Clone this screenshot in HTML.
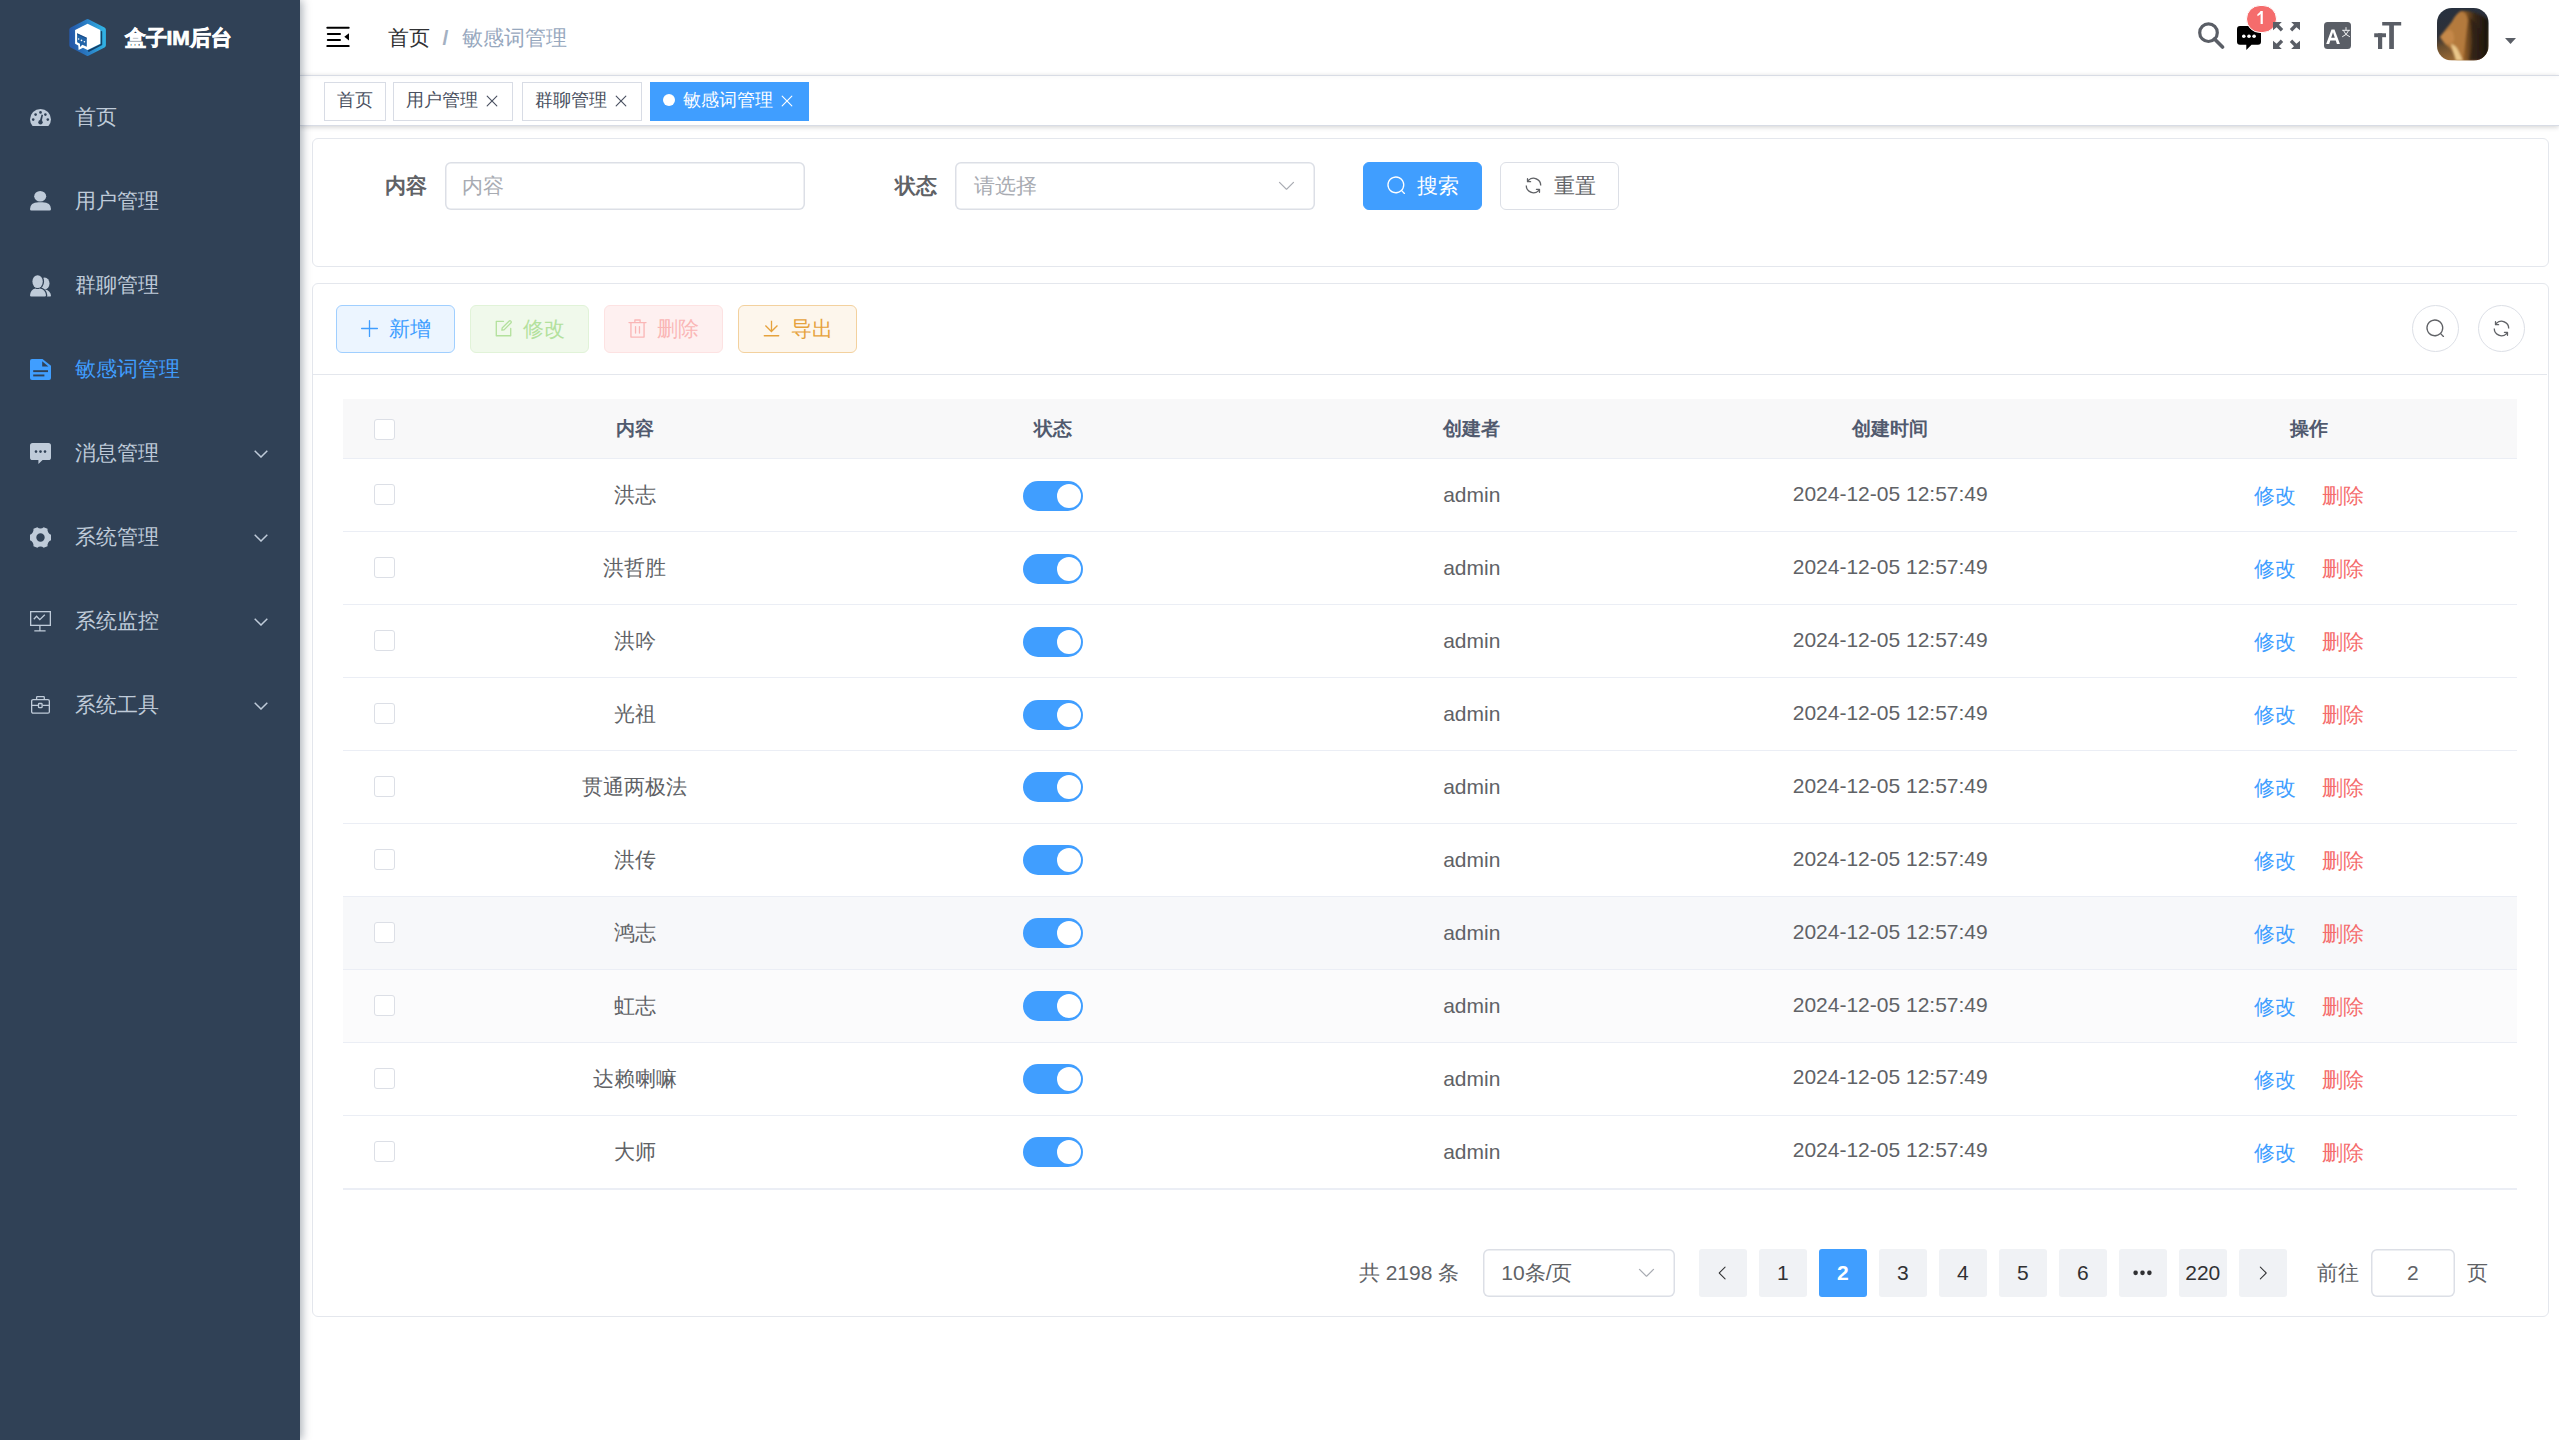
<!DOCTYPE html>
<html><head><meta charset="utf-8">
<style>
*{box-sizing:border-box;margin:0;padding:0}
html,body{width:2559px;height:1440px;overflow:hidden;background:#fff;font-family:"Liberation Sans",sans-serif;}
.abs{position:absolute}
#side{position:absolute;left:0;top:0;width:300px;height:1440px;background:#304156;z-index:3;box-shadow:2px 0 9px rgba(0,21,41,.35)}
.title{position:absolute;left:124.5px;top:0;line-height:75px;color:#fff;font-weight:bold;font-size:21px;-webkit-text-stroke:0.7px #fff}
.mi{position:absolute;left:0;width:300px;height:84px;line-height:84px;color:#bfcbd9;font-size:21px}
.mi svg{position:absolute}
.mi .tx{position:absolute;left:75px;top:0.7px}
.mi.act{color:#409eff}
#nav{position:absolute;left:300px;top:0;width:2259px;height:75px;background:#fff}
#navline{position:absolute;left:300px;top:74.8px;width:2259px;height:1.5px;background:#d8dce5;box-shadow:0 0 4px rgba(0,21,41,.10);z-index:2}
#nav svg{position:absolute}
#tags{position:absolute;left:300px;top:75px;width:2259px;height:51px;background:#fff;border-bottom:1.5px solid #d8dce5;box-shadow:0 1.5px 4.5px 0 rgba(0,0,0,.12),0 0 4.5px 0 rgba(0,0,0,.04)}
.tag{position:absolute;top:7px;height:39px;line-height:34px;border:1.5px solid #d8dce5;color:#495060;background:#fff;font-size:18px}
.tag span{position:absolute;top:0}
.tag svg{position:absolute}
.tag.act{background:#409eff;border-color:#409eff;color:#fff}
.card{position:absolute;left:312.5px;width:2236px;border:1.5px solid #e4e7ed;border-radius:6px;background:#fff}
.lbl{position:absolute;font-size:21px;font-weight:bold;color:#606266;line-height:48px}
.inp{position:absolute;height:48px;border-radius:6px;box-shadow:0 0 0 1.5px #dcdfe6 inset;font-size:21px;line-height:48px;color:#a8abb2}
.inp span{position:absolute;top:0}
.btn{position:absolute;height:48px;border-radius:6px;font-size:21px;line-height:46px;border:1.5px solid}
.btn span{position:absolute;top:0}
.btn svg{position:absolute}
.th{position:absolute;top:0;height:59px;line-height:59px;font-size:19px;font-weight:bold;color:#515a6e;text-align:center}
.row{position:absolute;left:0;width:2174px;height:72.93px;border-bottom:1.5px solid #ebeef5}
.td{position:absolute;top:0;height:72px;line-height:72px;font-size:21px;color:#606266;text-align:center}
.cb{position:absolute;left:30.8px;width:21px;height:21px;border:1.5px solid #dcdfe6;border-radius:3px;background:#fff}
.sw{position:absolute;left:679.8px;width:60px;height:30px;border-radius:15px;background:#409eff}
.sw:after{content:"";position:absolute;right:2.5px;top:3px;width:24px;height:24px;border-radius:50%;background:#fff}
.pg{position:absolute;top:0;width:48px;height:48px;line-height:48px;border-radius:3px;background:#f0f2f5;color:#303133;font-size:21px;text-align:center}
</style></head><body>

<div id="side">
<svg class="abs" style="left:64px;top:14px;width:48px;height:46px" viewBox="0 0 48 46">
<defs><linearGradient id="lg" x1="0" y1="0.5" x2="1" y2="0.4"><stop offset="0" stop-color="#2559a9"/><stop offset=".5" stop-color="#2a7fc6"/><stop offset="1" stop-color="#31b1e3"/></linearGradient>
<filter id="bl" x="-20%" y="-20%" width="140%" height="140%"><feGaussianBlur stdDeviation="0.6"/></filter></defs>
<path fill="url(#lg)" stroke="url(#lg)" stroke-width="5" stroke-linejoin="round" d="M23.8 7.6L39.4 15.7V31.3L23.8 39.4L7.8 31.3V15.7Z"/>
<path fill="#0a2240" opacity=".75" filter="url(#bl)" d="M36.6 16.5L38.2 17.5V31L24.6 38L23.6 36.4L36.6 29.9Z"/>
<path fill="#fff" d="M11.1 16L23.6 9.7L36.3 16V29.7L23.6 36.1L19 33.8L14.6 35.9L14.3 31.4L11.1 29.7Z"/>
<path fill="#2163a8" d="M13.1 19.3L22.8 23.8V32.8L18.3 30.7L16 33.1V29.7L13.1 28.3Z"/>
<path fill="#0f3b70" opacity=".6" d="M13.1 19.3L22.8 23.8V24.8L13.1 20.4Z"/>
<g fill="#fff"><circle cx="14.6" cy="25" r="0.8"/><circle cx="17.5" cy="26.4" r="0.8"/><circle cx="20.4" cy="27.8" r="0.8"/></g>
</svg>
<div class="title">盒子IM后台</div>
<div class="mi" style="top:74px">
<svg style="left:30px;top:35px;width:21px;height:17px" viewBox="0 0 21 17"><path fill="#bfcbd9" d="M2.6 17H18.4Q21 13.8 21 10.5A10.5 10.5 0 0 0 0 10.5Q0 13.8 2.6 17Z"/><g fill="#304156"><circle cx="3.2" cy="10.6" r="1.3"/><circle cx="5.6" cy="5.6" r="1.3"/><circle cx="10.5" cy="3.4" r="1.3"/><circle cx="15.4" cy="5.6" r="1.3"/><circle cx="17.8" cy="10.6" r="1.3"/><circle cx="10.5" cy="13.2" r="2.2"/><path d="M9.5 12.8L11.6 5.6L13 6L11.5 13.2Z"/></g></svg>
<span class="tx">首页</span>
</div>
<div class="mi" style="top:158px">
<svg style="left:30px;top:32px;width:21px;height:21px" viewBox="0 0 21 21"><g fill="#bfcbd9"><ellipse cx="10.2" cy="6.2" rx="6" ry="5.2"/><path d="M0 19Q0 12.5 8.5 12.2H12.5Q21 12.5 21 19Q21 20.6 19.6 20.6H1.4Q0 20.6 0 19Z"/></g></svg>
<span class="tx">用户管理</span>
</div>
<div class="mi" style="top:242px">
<svg style="left:30px;top:32.5px;width:21px;height:22px" viewBox="0 0 21 22"><g fill="#bfcbd9"><ellipse cx="14.6" cy="8.6" rx="4.9" ry="6"/><path d="M9 15.5Q12 14.6 15.2 14.6Q20.6 15.8 21 20.8Q21 21.6 20.2 21.6H12Z"/></g><g stroke="#304156" stroke-width="2.6" fill="#304156"><ellipse cx="7.6" cy="6.6" rx="5.2" ry="6.4"/><path d="M0 20.2Q0.5 14.6 5.4 13.4Q7.6 14.8 9.8 13.4Q15.6 14.6 16 20.2Q16 21.6 14.8 21.6H1.2Q0 21.6 0 20.2Z"/></g><g fill="#bfcbd9"><ellipse cx="7.6" cy="6.6" rx="5.2" ry="6.4"/><path d="M0 20.2Q0.5 14.6 5.4 13.4Q7.6 14.8 9.8 13.4Q15.6 14.6 16 20.2Q16 21.6 14.8 21.6H1.2Q0 21.6 0 20.2Z"/></g></svg>
<span class="tx">群聊管理</span>
</div>
<div class="mi act" style="top:326px">
<svg style="left:30px;top:33px;width:21px;height:21px" viewBox="0 0 21 21"><path fill="#409eff" d="M2 0H12.5L21 6.8V19Q21 21 19 21H2Q0 21 0 19V2Q0 0 2 0Z"/><g fill="#304156"><path d="M12.2 2.3V7.5H18.4Z"/><rect x="3.2" y="11.2" width="14.8" height="1.9"/><rect x="3.2" y="15.5" width="11.2" height="1.9"/></g></svg>
<span class="tx">敏感词管理</span>
</div>
<div class="mi" style="top:410px">
<svg style="left:30px;top:33px;width:21px;height:21px" viewBox="0 0 21 21"><path fill="#bfcbd9" d="M2.6 0H18.4Q21 0 21 2.6V14.4Q21 17 18.4 17H12.6L8.4 21V17H2.6Q0 17 0 14.4V2.6Q0 0 2.6 0Z"/><g fill="#304156"><circle cx="6" cy="8.6" r="1.3"/><circle cx="10.5" cy="8.6" r="1.3"/><circle cx="15" cy="8.6" r="1.3"/></g></svg>
<span class="tx">消息管理</span>
<svg style="left:254px;top:40px;width:14px;height:8px" viewBox="0 0 14 8"><path d="M0.7 0.7L7 7L13.3 0.7" fill="none" stroke="#bfcbd9" stroke-width="1.5"/></svg>
</div>
<div class="mi" style="top:494px">
<svg style="left:30px;top:33px;width:21px;height:21px" viewBox="0 0 21 21"><path fill="#bfcbd9" fill-rule="evenodd" d="M7.3 0.3Q8.7 1.6 10.5 1.6Q12.3 1.6 13.7 0.3L17.5 1.7Q17.3 3.8 18.3 5.5Q19.4 7.2 21 7.8V13.2Q19.4 13.8 18.3 15.5Q17.3 17.2 17.5 19.3L13.7 20.7Q12.3 19.4 10.5 19.4Q8.7 19.4 7.3 20.7L3.5 19.3Q3.7 17.2 2.7 15.5Q1.6 13.8 0 13.2V7.8Q1.6 7.2 2.7 5.5Q3.7 3.8 3.5 1.7Z M10.5 6.3A4.2 4.2 0 1 0 10.5 14.7A4.2 4.2 0 1 0 10.5 6.3Z"/></svg>
<span class="tx">系统管理</span>
<svg style="left:254px;top:40px;width:14px;height:8px" viewBox="0 0 14 8"><path d="M0.7 0.7L7 7L13.3 0.7" fill="none" stroke="#bfcbd9" stroke-width="1.5"/></svg>
</div>
<div class="mi" style="top:578px">
<svg style="left:30px;top:33px;width:21px;height:21px" viewBox="0 0 21 21"><g fill="none" stroke="#bfcbd9" stroke-width="1.3"><rect x="0.65" y="0.65" width="19.7" height="13.7"/><path d="M9.9 14.3V19.9M4.3 19.9H15.6"/><path d="M3.8 8.2L6.6 5.2L9.8 8.6L14.8 3.7"/></g></svg>
<span class="tx">系统监控</span>
<svg style="left:254px;top:40px;width:14px;height:8px" viewBox="0 0 14 8"><path d="M0.7 0.7L7 7L13.3 0.7" fill="none" stroke="#bfcbd9" stroke-width="1.5"/></svg>
</div>
<div class="mi" style="top:662px">
<svg style="left:31px;top:34px;width:19px;height:18px" viewBox="0 0 19 18"><g fill="none" stroke="#bfcbd9" stroke-width="1.3"><rect x="0.65" y="3.6" width="17.7" height="13.6" rx="1.5"/><path d="M5.6 3.4V1.4Q5.6 0.65 6.4 0.65H12.6Q13.3 0.65 13.3 1.4V3.6"/><path d="M0.7 9.3H7.5M11.5 9.3H18.3"/><rect x="7.5" y="7.5" width="3.6" height="4.2" rx="0.8"/></g></svg>
<span class="tx">系统工具</span>
<svg style="left:254px;top:40px;width:14px;height:8px" viewBox="0 0 14 8"><path d="M0.7 0.7L7 7L13.3 0.7" fill="none" stroke="#bfcbd9" stroke-width="1.5"/></svg>
</div>
</div>
<div id="nav">
<svg style="left:26px;top:26px;width:24px;height:21px" viewBox="0 0 24 21"><g fill="#000"><rect x="0.3" y="0.8" width="23.4" height="2" rx="1"/><rect x="0.8" y="6.9" width="14.2" height="2" rx="1"/><rect x="0.8" y="13.1" width="14.2" height="2" rx="1"/><rect x="0.3" y="19.1" width="23.4" height="2" rx="1"/><path d="M23 7.2V14.5L18.3 10.8Z"/></g></svg>
<div class="abs" style="left:88px;top:0;line-height:75px;font-size:21px;color:#303133">首页</div>
<div class="abs" style="left:142.5px;top:0;line-height:75px;font-size:21px;color:#a3b0c2;font-weight:bold">/</div>
<div class="abs" style="left:162px;top:0;line-height:75px;font-size:21px;color:#97a8be">敏感词管理</div>
<svg style="left:1897px;top:21px;width:28px;height:28px" viewBox="0 0 28 28"><circle cx="11.5" cy="11.7" r="8.8" fill="none" stroke="#5a5e66" stroke-width="3.2"/><path d="M17.5 18L25.5 26" stroke="#5a5e66" stroke-width="3.6" stroke-linecap="round"/></svg>
<svg style="left:1937px;top:26px;width:24px;height:25px" viewBox="0 0 24 25"><path fill="#000" d="M3 0H21Q24 0 24 3V15.8Q24 18.8 21 18.8H14.5L9.3 24V18.8H3Q0 18.8 0 15.8V3Q0 0 3 0Z"/><g fill="#fff"><circle cx="6.8" cy="10.2" r="1.8"/><circle cx="12" cy="10.2" r="1.8"/><circle cx="17.1" cy="10.2" r="1.8"/></g></svg>
<div class="abs" style="left:1945.5px;top:4.7px;width:31px;height:28px;border-radius:15px;background:#f56c6c;border:1.5px solid #fff"><svg class="abs" style="left:10px;top:5.8px;width:8px;height:14px" viewBox="0 0 8 14"><path fill="#fff" d="M3.6 0H5.8V13.1H3.6V3.1Q2.3 4.4 0.4 5.2V3.2Q2.6 2.1 3.6 0Z"/></svg></div>
<svg style="left:1973px;top:22px;width:27px;height:27px" viewBox="0 0 27 27"><g fill="#5a5e66"><path d="M0 0H8.8L6 2.8L10.2 7L7.8 9.4L3.6 5.2L0 8.2Z"/><path d="M27 0H18.2L21 2.8L16.8 7L19.2 9.4L23.4 5.2L27 8.2Z"/><path d="M0 27H8.8L6 24.2L10.2 20L7.8 17.6L3.6 21.8L0 18.8Z"/><path d="M27 27H18.2L21 24.2L16.8 20L19.2 17.6L23.4 21.8L27 18.8Z"/></g></svg>
<svg style="left:2024px;top:22px;width:27px;height:27px" viewBox="0 0 27 27"><rect x="0" y="0" width="27" height="27" rx="3.5" fill="#5a5e66"/><path fill="#fff" d="M2.2 22H5.2L6.3 18.5H11.8L12.9 22H15.9L10.5 7.5H7.5Z M7.2 15.8L9 10.2L10.8 15.8Z"/><g fill="none" stroke="#fff" stroke-width="0.9"><path d="M18.2 8.3H25.9M22 5.2V8.3M19.5 8.5Q21 13 25.9 14.8M24.6 8.5Q23 13 18.2 14.8"/></g></svg>
<svg style="left:2074px;top:22px;width:28px;height:27px" viewBox="0 0 28 27"><g fill="#5a5e66"><rect x="8.2" y="0" width="19" height="3.5"/><rect x="15.2" y="0" width="4.7" height="27"/><rect x="0.2" y="11.3" width="11.8" height="3.9"/><rect x="4" y="11.3" width="4.2" height="15.7"/></g></svg>
<svg style="left:2137.3px;top:8.1px;width:51.6px;height:52.6px" viewBox="0 0 52 53">
<defs><clipPath id="av"><rect x="0" y="0" width="52" height="53" rx="15"/></clipPath>
<linearGradient id="bgav" x1="0" y1="0" x2="0.3" y2="1"><stop offset="0" stop-color="#263140"/><stop offset=".5" stop-color="#2d3038"/><stop offset=".7" stop-color="#6a4e2e"/><stop offset="1" stop-color="#9c6c36"/></linearGradient>
<linearGradient id="mane" x1="0" y1="0" x2="1" y2="0"><stop offset="0" stop-color="#d09050"/><stop offset=".45" stop-color="#a86a2c"/><stop offset=".7" stop-color="#3c2a18"/><stop offset="1" stop-color="#17120c"/></linearGradient>
<filter id="avb" filterUnits="userSpaceOnUse" x="-5" y="-5" width="62" height="63"><feGaussianBlur stdDeviation="1"/></filter></defs>
<g clip-path="url(#av)"><rect width="52" height="53" fill="url(#bgav)"/>
<g filter="url(#avb)">
<path fill="url(#mane)" d="M24 3Q38 2 52 12V53H20Q17 44 13 40Q8 37 5 32Q2 29 4 28Q10 20 15 14Q19 6 24 3Z"/>
<path fill="#b47a3c" d="M24 4Q30 4 31 12Q29 30 26 53H20Q17 44 13 40Q8 37 5 32Q2 29 4 28Q10 20 15 14Q19 6 24 4Z"/>
<path fill="#c98c4c" opacity=".8" d="M4 28Q10 22 14 22Q18 26 17 33Q14 37 9 36Q5 33 4 28Z"/>
<path fill="#f3d598" opacity=".85" d="M14 36Q19 38 21 42Q24 48 26 53H19Q16 44 14 36Z"/>
<path fill="#2a1c10" opacity=".6" d="M33 10Q40 14 44 24Q46 40 42 53H32Q36 40 35 28Q34 18 33 10Z"/>
</g></g></svg>
<svg style="left:2204.5px;top:38px;width:11px;height:6px" viewBox="0 0 11 6"><path d="M0 0H11L5.5 6Z" fill="#5a5e66"/></svg>
</div>
<div id="navline"></div>
<div id="tags">
<div class="tag" style="left:24px;width:61.5px"><span style="left:12px">首页</span></div>
<div class="tag" style="left:93.3px;width:120px"><span style="left:12px">用户管理</span><svg style="position:absolute;left:88.5px;top:9px;width:18px;height:18px" viewBox="0 0 1024 1024"><path fill="#495060" d="M764.288 214.592 512 466.88 259.712 214.592a31.936 31.936 0 0 0-45.12 45.12L466.752 512 214.528 764.224a31.936 31.936 0 1 0 45.12 45.184L512 557.184l252.288 252.288a31.936 31.936 0 0 0 45.12-45.12L557.12 512.064l252.288-252.352a31.936 31.936 0 1 0-45.12-45.184z"/></svg></div>
<div class="tag" style="left:222.3px;width:120px"><span style="left:12px">群聊管理</span><svg style="position:absolute;left:88.5px;top:9px;width:18px;height:18px" viewBox="0 0 1024 1024"><path fill="#495060" d="M764.288 214.592 512 466.88 259.712 214.592a31.936 31.936 0 0 0-45.12 45.12L466.752 512 214.528 764.224a31.936 31.936 0 1 0 45.12 45.184L512 557.184l252.288 252.288a31.936 31.936 0 0 0 45.12-45.12L557.12 512.064l252.288-252.352a31.936 31.936 0 1 0-45.12-45.184z"/></svg></div>
<div class="tag act" style="left:350px;width:158.8px"><div class="abs" style="left:11.5px;top:10.5px;width:12px;height:12px;border-radius:50%;background:#fff"></div><span style="left:32px">敏感词管理</span><svg style="position:absolute;left:127px;top:9px;width:18px;height:18px" viewBox="0 0 1024 1024"><path fill="#fff" d="M764.288 214.592 512 466.88 259.712 214.592a31.936 31.936 0 0 0-45.12 45.12L466.752 512 214.528 764.224a31.936 31.936 0 1 0 45.12 45.184L512 557.184l252.288 252.288a31.936 31.936 0 0 0 45.12-45.12L557.12 512.064l252.288-252.352a31.936 31.936 0 1 0-45.12-45.184z"/></svg></div>
</div>
<div class="card" style="top:137.7px;height:129.5px;left:311.8px;width:2237.5px">
<div class="lbl" style="left:72.7px;top:23.3px">内容</div>
<div class="inp" style="left:132.2px;top:23.3px;width:359.7px"><span style="left:17px">内容</span></div>
<div class="lbl" style="left:582.7px;top:23.3px">状态</div>
<div class="inp" style="left:642.2px;top:23.3px;width:359.7px"><span style="left:19px">请选择</span><svg style="position:absolute;left:320.7px;top:13.5px;width:21px;height:21px" viewBox="0 0 1024 1024"><path fill="#a8abb2" d="M831.872 340.864 512 652.672 192.128 340.864a30.592 30.592 0 0 0-42.752 0 29.12 29.12 0 0 0 0 41.6L489.664 714.24a32 32 0 0 0 44.672 0l340.288-331.712a29.12 29.12 0 0 0 0-41.728 30.592 30.592 0 0 0-42.752 0z"/></svg></div>
<div class="btn" style="left:1050.2px;top:23.3px;width:119px;background:#409eff;border-color:#409eff;color:#fff"><svg style="position:absolute;left:22.5px;top:12px;width:21px;height:21px" viewBox="0 0 1024 1024"><path fill="#fff" d="m795.904 750.72 124.992 124.928a32 32 0 0 1-45.248 45.248L750.656 795.904a416 416 0 1 1 45.248-45.248zM480 832a352 352 0 1 0 0-704 352 352 0 0 0 0 704z"/></svg><span style="left:52.7px">搜索</span></div>
<div class="btn" style="left:1187.2px;top:23.3px;width:119px;background:#fff;border-color:#dcdfe6;color:#606266"><svg style="position:absolute;left:22.5px;top:12px;width:21px;height:21px" viewBox="0 0 1024 1024"><path fill="#606266" d="M771.776 794.88A384 384 0 0 1 128 512h64a320 320 0 0 0 555.712 216.448H654.72a32 32 0 1 1 0-64h149.056a32 32 0 0 1 32 32v148.928a32 32 0 1 1-64 0v-50.56zM276.288 295.616h92.992a32 32 0 0 1 0 64H220.16a32 32 0 0 1-32-32V178.56a32 32 0 0 1 64 0v50.56A384 384 0 0 1 896.128 512h-64a320 320 0 0 0-555.776-216.384z"/></svg><span style="left:52.7px">重置</span></div>
</div>
<div class="card" style="top:283.05px;height:1034px;left:311.8px;width:2237.5px">
<div class="btn" style="left:22.8px;top:20.5px;width:119px;background:#ecf5ff;border-color:#a0cfff;color:#409eff"><svg style="position:absolute;left:22.5px;top:12px;width:21px;height:21px" viewBox="0 0 1024 1024"><path fill="#409eff" d="M480 480V128a32 32 0 0 1 64 0v352h352a32 32 0 1 1 0 64H544v352a32 32 0 1 1-64 0V544H128a32 32 0 0 1 0-64h352z"/></svg><span style="left:52.3px">新增</span></div>
<div class="btn" style="left:156.8px;top:20.5px;width:119px;background:#f0f9eb;border-color:#e1f3d8;color:#b3e19d"><svg style="position:absolute;left:22.5px;top:12px;width:21px;height:21px" viewBox="0 0 1024 1024"><path fill="#b3e19d" d="M832 512a32 32 0 1 1 64 0v352a32 32 0 0 1-32 32H160a32 32 0 0 1-32-32V160a32 32 0 0 1 32-32h352a32 32 0 0 1 0 64H192v640h640V512z"/><path fill="#b3e19d" d="m469.952 554.24 52.8-7.552L847.104 222.4a32 32 0 1 0-45.248-45.248L477.44 501.44l-7.552 52.8zm422.4-422.4a96 96 0 0 1 0 135.808l-331.84 331.84a32 32 0 0 1-18.112 9.088L436.8 623.68a32 32 0 0 1-36.224-36.224l15.104-105.6a32 32 0 0 1 9.024-18.112l331.904-331.84a96 96 0 0 1 135.744 0z"/></svg><span style="left:52.3px">修改</span></div>
<div class="btn" style="left:290.8px;top:20.5px;width:119px;background:#fef0f0;border-color:#fde2e2;color:#fab6b6"><svg style="position:absolute;left:22.5px;top:12px;width:21px;height:21px" viewBox="0 0 1024 1024"><path fill="#fab6b6" d="M160 256H96a32 32 0 0 1 0-64h256V95.936a32 32 0 0 1 32-32h256a32 32 0 0 1 32 32V192h256a32 32 0 1 1 0 64h-64v672a32 32 0 0 1-32 32H192a32 32 0 0 1-32-32V256zm448-64v-64H416v64h192zM224 896h576V256H224v640zm192-128a32 32 0 0 1-32-32V416a32 32 0 0 1 64 0v320a32 32 0 0 1-32 32zm192 0a32 32 0 0 1-32-32V416a32 32 0 0 1 64 0v320a32 32 0 0 1-32 32z"/></svg><span style="left:52.3px">删除</span></div>
<div class="btn" style="left:424.8px;top:20.5px;width:119px;background:#fdf6ec;border-color:#f3d19e;color:#e6a23c"><svg style="position:absolute;left:22.5px;top:12px;width:21px;height:21px" viewBox="0 0 1024 1024"><path fill="#e6a23c" d="M160 832h704a32 32 0 1 1 0 64H160a32 32 0 1 1 0-64zm384-253.696 236.288-236.352 45.248 45.248L508.8 704 192 387.2l45.248-45.248L480 584.704V128h64v450.304z"/></svg><span style="left:52.3px">导出</span></div>
<div class="abs" style="left:2099px;top:20.5px;width:47.5px;height:47.5px;border-radius:50%;border:1.5px solid #dcdfe6"><svg style="position:absolute;left:12px;top:12px;width:21px;height:21px" viewBox="0 0 1024 1024"><path fill="#606266" d="m795.904 750.72 124.992 124.928a32 32 0 0 1-45.248 45.248L750.656 795.904a416 416 0 1 1 45.248-45.248zM480 832a352 352 0 1 0 0-704 352 352 0 0 0 0 704z"/></svg></div>
<div class="abs" style="left:2165px;top:20.5px;width:47.5px;height:47.5px;border-radius:50%;border:1.5px solid #dcdfe6"><svg style="position:absolute;left:12px;top:12px;width:21px;height:21px" viewBox="0 0 1024 1024"><path fill="#606266" d="M771.776 794.88A384 384 0 0 1 128 512h64a320 320 0 0 0 555.712 216.448H654.72a32 32 0 1 1 0-64h149.056a32 32 0 0 1 32 32v148.928a32 32 0 1 1-64 0v-50.56zM276.288 295.616h92.992a32 32 0 0 1 0 64H220.16a32 32 0 0 1-32-32V178.56a32 32 0 0 1 64 0v50.56A384 384 0 0 1 896.128 512h-64a320 320 0 0 0-555.776-216.384z"/></svg></div>
<div class="abs" style="left:0;top:89.9px;width:2234.5px;height:1.5px;background:#e4e7ed"></div>
<div class="abs" style="left:30.7px;top:115.2px;width:2174px;height:800px">
<div class="abs" style="left:0;top:0;width:2174px;height:60px;background:#f8f8f9;border-bottom:1.5px solid #ebeef5"></div>
<div class="cb" style="top:19.5px"></div>
<div class="th" style="left:82.0px;width:418.5px">内容</div>
<div class="th" style="left:500.5px;width:418.5px">状态</div>
<div class="th" style="left:919.0px;width:418.5px">创建者</div>
<div class="th" style="left:1337.5px;width:418.5px">创建时间</div>
<div class="th" style="left:1756.0px;width:418.5px">操作</div>
<div class="row" style="top:60.00px;background:#fff">
<div class="cb" style="top:25px"></div>
<div class="td" style="left:82px;width:418.5px">洪志</div>
<div class="sw" style="top:21.5px"></div>
<div class="td" style="left:919px;width:418.5px">admin</div>
<div class="td" style="left:1337.5px;width:418.5px;top:-1.2px">2024-12-05 12:57:49</div>
<div class="td" style="left:1756px;width:418.5px;padding-top:1.2px"><span style="color:#409eff;margin-right:26px">修改</span><span style="color:#f56c6c">删除</span></div>
</div>
<div class="row" style="top:132.93px;background:#fff">
<div class="cb" style="top:25px"></div>
<div class="td" style="left:82px;width:418.5px">洪哲胜</div>
<div class="sw" style="top:21.5px"></div>
<div class="td" style="left:919px;width:418.5px">admin</div>
<div class="td" style="left:1337.5px;width:418.5px;top:-1.2px">2024-12-05 12:57:49</div>
<div class="td" style="left:1756px;width:418.5px;padding-top:1.2px"><span style="color:#409eff;margin-right:26px">修改</span><span style="color:#f56c6c">删除</span></div>
</div>
<div class="row" style="top:205.86px;background:#fff">
<div class="cb" style="top:25px"></div>
<div class="td" style="left:82px;width:418.5px">洪吟</div>
<div class="sw" style="top:21.5px"></div>
<div class="td" style="left:919px;width:418.5px">admin</div>
<div class="td" style="left:1337.5px;width:418.5px;top:-1.2px">2024-12-05 12:57:49</div>
<div class="td" style="left:1756px;width:418.5px;padding-top:1.2px"><span style="color:#409eff;margin-right:26px">修改</span><span style="color:#f56c6c">删除</span></div>
</div>
<div class="row" style="top:278.79px;background:#fff">
<div class="cb" style="top:25px"></div>
<div class="td" style="left:82px;width:418.5px">光祖</div>
<div class="sw" style="top:21.5px"></div>
<div class="td" style="left:919px;width:418.5px">admin</div>
<div class="td" style="left:1337.5px;width:418.5px;top:-1.2px">2024-12-05 12:57:49</div>
<div class="td" style="left:1756px;width:418.5px;padding-top:1.2px"><span style="color:#409eff;margin-right:26px">修改</span><span style="color:#f56c6c">删除</span></div>
</div>
<div class="row" style="top:351.72px;background:#fff">
<div class="cb" style="top:25px"></div>
<div class="td" style="left:82px;width:418.5px">贯通两极法</div>
<div class="sw" style="top:21.5px"></div>
<div class="td" style="left:919px;width:418.5px">admin</div>
<div class="td" style="left:1337.5px;width:418.5px;top:-1.2px">2024-12-05 12:57:49</div>
<div class="td" style="left:1756px;width:418.5px;padding-top:1.2px"><span style="color:#409eff;margin-right:26px">修改</span><span style="color:#f56c6c">删除</span></div>
</div>
<div class="row" style="top:424.65px;background:#fff">
<div class="cb" style="top:25px"></div>
<div class="td" style="left:82px;width:418.5px">洪传</div>
<div class="sw" style="top:21.5px"></div>
<div class="td" style="left:919px;width:418.5px">admin</div>
<div class="td" style="left:1337.5px;width:418.5px;top:-1.2px">2024-12-05 12:57:49</div>
<div class="td" style="left:1756px;width:418.5px;padding-top:1.2px"><span style="color:#409eff;margin-right:26px">修改</span><span style="color:#f56c6c">删除</span></div>
</div>
<div class="row" style="top:497.58px;background:#f7f8fa">
<div class="cb" style="top:25px"></div>
<div class="td" style="left:82px;width:418.5px">鸿志</div>
<div class="sw" style="top:21.5px"></div>
<div class="td" style="left:919px;width:418.5px">admin</div>
<div class="td" style="left:1337.5px;width:418.5px;top:-1.2px">2024-12-05 12:57:49</div>
<div class="td" style="left:1756px;width:418.5px;padding-top:1.2px"><span style="color:#409eff;margin-right:26px">修改</span><span style="color:#f56c6c">删除</span></div>
</div>
<div class="row" style="top:570.51px;background:#fbfbfc">
<div class="cb" style="top:25px"></div>
<div class="td" style="left:82px;width:418.5px">虹志</div>
<div class="sw" style="top:21.5px"></div>
<div class="td" style="left:919px;width:418.5px">admin</div>
<div class="td" style="left:1337.5px;width:418.5px;top:-1.2px">2024-12-05 12:57:49</div>
<div class="td" style="left:1756px;width:418.5px;padding-top:1.2px"><span style="color:#409eff;margin-right:26px">修改</span><span style="color:#f56c6c">删除</span></div>
</div>
<div class="row" style="top:643.44px;background:#fff">
<div class="cb" style="top:25px"></div>
<div class="td" style="left:82px;width:418.5px">达赖喇嘛</div>
<div class="sw" style="top:21.5px"></div>
<div class="td" style="left:919px;width:418.5px">admin</div>
<div class="td" style="left:1337.5px;width:418.5px;top:-1.2px">2024-12-05 12:57:49</div>
<div class="td" style="left:1756px;width:418.5px;padding-top:1.2px"><span style="color:#409eff;margin-right:26px">修改</span><span style="color:#f56c6c">删除</span></div>
</div>
<div class="row" style="top:716.37px;background:#fff">
<div class="cb" style="top:25px"></div>
<div class="td" style="left:82px;width:418.5px">大师</div>
<div class="sw" style="top:21.5px"></div>
<div class="td" style="left:919px;width:418.5px">admin</div>
<div class="td" style="left:1337.5px;width:418.5px;top:-1.2px">2024-12-05 12:57:49</div>
<div class="td" style="left:1756px;width:418.5px;padding-top:1.2px"><span style="color:#409eff;margin-right:26px">修改</span><span style="color:#f56c6c">删除</span></div>
</div>
<div class="abs" style="left:0;top:788.3px;width:2174px;height:2px;background:#ebeef5"></div>
</div>
<div class="abs" style="left:1px;top:964.7px;width:2233px;height:48px">
<div class="abs" style="left:1045px;top:0;line-height:48px;font-size:21px;color:#606266">共 2198 条</div>
<div class="inp" style="left:1169px;top:0;width:192px"><span style="left:18.5px;color:#606266">10条/页</span><svg style="position:absolute;left:153px;top:13.5px;width:21px;height:21px" viewBox="0 0 1024 1024"><path fill="#a8abb2" d="M831.872 340.864 512 652.672 192.128 340.864a30.592 30.592 0 0 0-42.752 0 29.12 29.12 0 0 0 0 41.6L489.664 714.24a32 32 0 0 0 44.672 0l340.288-331.712a29.12 29.12 0 0 0 0-41.728 30.592 30.592 0 0 0-42.752 0z"/></svg></div>
<div class="pg" style="left:1385px;"><svg style="position:absolute;left:15px;top:15px;width:18px;height:18px" viewBox="0 0 1024 1024"><path fill="#303133" d="M609.408 149.376 277.76 489.6a32 32 0 0 0 0 44.672l331.648 340.352a29.12 29.12 0 0 0 41.728 0 30.592 30.592 0 0 0 0-42.752L339.264 511.936l311.872-319.872a30.592 30.592 0 0 0 0-42.688 29.12 29.12 0 0 0-41.728 0z"/></svg></div>
<div class="pg" style="left:1445px;">1</div>
<div class="pg" style="left:1505px;background:#409eff;color:#fff;font-weight:bold">2</div>
<div class="pg" style="left:1565px;">3</div>
<div class="pg" style="left:1625px;">4</div>
<div class="pg" style="left:1685px;">5</div>
<div class="pg" style="left:1745px;">6</div>
<div class="pg" style="left:1805px;"><svg style="position:absolute;left:13.5px;top:13.5px;width:21px;height:21px" viewBox="0 0 1024 1024"><path fill="#303133" d="M176 416a112 112 0 1 1 0 224 112 112 0 0 1 0-224zm336 0a112 112 0 1 1 0 224 112 112 0 0 1 0-224zm336 0a112 112 0 1 1 0 224 112 112 0 0 1 0-224z"/></svg></div>
<div class="pg" style="left:1865px;">220</div>
<div class="pg" style="left:1925px;"><svg style="position:absolute;left:15px;top:15px;width:18px;height:18px" viewBox="0 0 1024 1024"><path fill="#303133" d="M340.864 149.312a30.592 30.592 0 0 0 0 42.752L652.736 512 340.864 831.872a30.592 30.592 0 0 0 0 42.752 29.12 29.12 0 0 0 41.728 0L714.24 534.336a32 32 0 0 0 0-44.672L382.592 149.376a29.12 29.12 0 0 0-41.728 0z"/></svg></div>
<div class="abs" style="left:2003px;top:0;line-height:48px;font-size:21px;color:#606266">前往</div>
<div class="inp" style="left:2057px;top:0;width:84px;text-align:center;color:#606266">2</div>
<div class="abs" style="left:2153px;top:0;line-height:48px;font-size:21px;color:#606266">页</div>
</div>
</div>
</body></html>
